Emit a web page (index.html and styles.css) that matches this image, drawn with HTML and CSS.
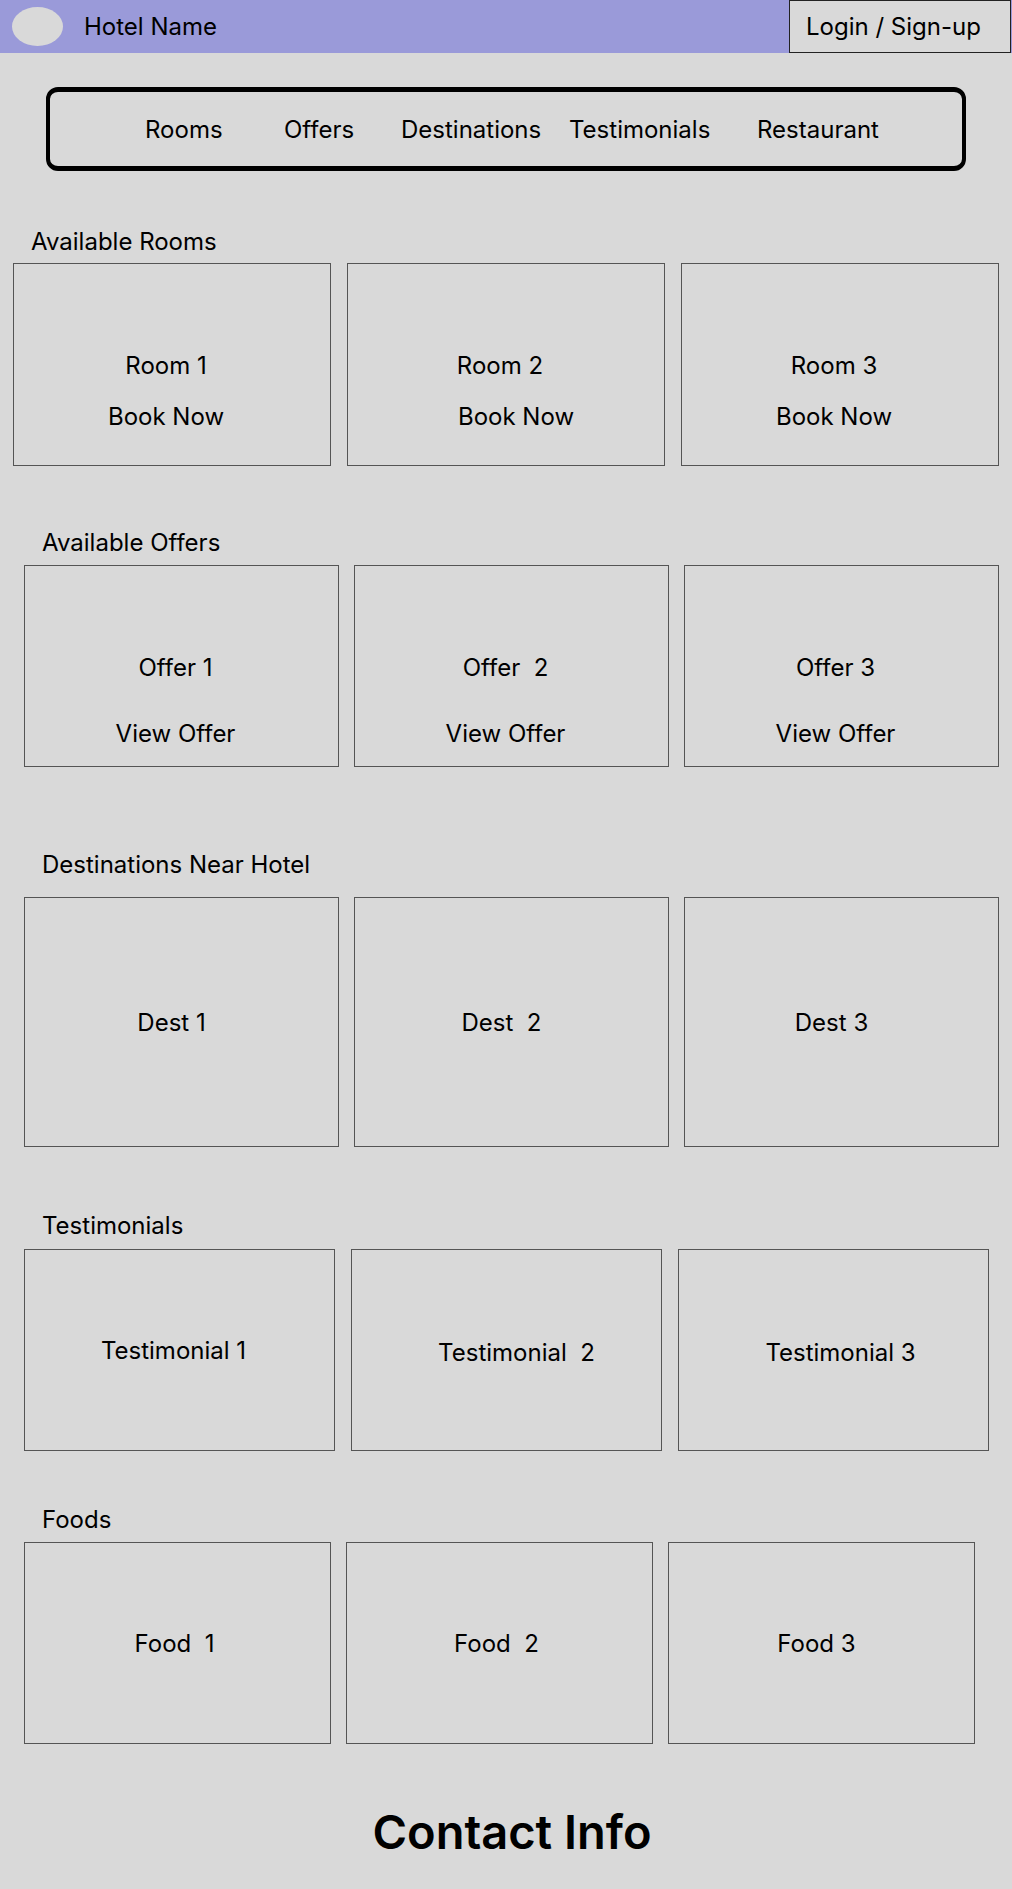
FILE: index.html
```html
<!DOCTYPE html>
<html lang="en">
<head>
    <meta charset="UTF-8">
    <meta name="viewport" content="width=device-width, initial-scale=1.0">
    <title>Hotel Name</title>
    <link rel="stylesheet" href="styles.css">
</head>
<body>
    <header class="topbar">
        <div class="logo"></div>
        <span class="hotel-name">Hotel Name</span>
        <a class="login" href="#">Login / Sign-up</a>
    </header>

    <nav class="menu">
        <a href="#rooms">Rooms</a>
        <a href="#offers">Offers</a>
        <a href="#destinations">Destinations</a>
        <a href="#testimonials">Testimonials</a>
        <a href="#restaurant">Restaurant</a>
    </nav>

    <section class="section rooms" id="rooms">
        <h2 class="section-title">Available Rooms</h2>
        <div class="cards">
            <div class="card"><span>Room 1</span><span>Book Now</span></div>
            <div class="card"><span>Room 2</span><span class="shift">Book Now</span></div>
            <div class="card"><span>Room 3</span><span>Book Now</span></div>
        </div>
    </section>

    <section class="section offers" id="offers">
        <h2 class="section-title">Available Offers</h2>
        <div class="cards">
            <div class="card"><span>Offer 1</span><span>View Offer</span></div>
            <div class="card"><span>Offer  2</span><span>View Offer</span></div>
            <div class="card"><span>Offer 3</span><span>View Offer</span></div>
        </div>
    </section>

    <section class="section dests" id="destinations">
        <h2 class="section-title">Destinations Near Hotel</h2>
        <div class="cards">
            <div class="card"><span>Dest 1</span></div>
            <div class="card"><span>Dest  2</span></div>
            <div class="card"><span>Dest 3</span></div>
        </div>
    </section>

    <section class="section reviews" id="testimonials">
        <h2 class="section-title">Testimonials</h2>
        <div class="cards">
            <div class="card"><span>Testimonial 1</span></div>
            <div class="card"><span>Testimonial  2</span></div>
            <div class="card"><span>Testimonial 3</span></div>
        </div>
    </section>

    <section class="section foods" id="restaurant">
        <h2 class="section-title">Foods</h2>
        <div class="cards">
            <div class="card"><span>Food  1</span></div>
            <div class="card"><span>Food  2</span></div>
            <div class="card"><span>Food 3</span></div>
        </div>
    </section>

    <footer class="contact">Contact Info</footer>
</body>
</html>
```

FILE: styles.css
```css
body {
    margin: 0;
    background-color: #d9d9d9;
    font-family: Inter, "Noto Sans", sans-serif;
    font-size: 24px;
    line-height: 29px;
    color: #000;
}

a {
    color: #000;
    text-decoration: none;
}

/* top bar */
.topbar {
    display: flex;
    align-items: center;
    height: 53px;
    background-color: #9a9ad9;
}

.logo {
    width: 51px;
    height: 39px;
    margin-left: 12px;
    border-radius: 50%;
    background-color: #d9d9d9;
}

.hotel-name {
    margin-left: 21px;
}

.login {
    display: flex;
    align-items: center;
    box-sizing: border-box;
    width: 222px;
    height: 53px;
    margin-left: auto;
    margin-right: 1px;
    padding-left: 16px;
    border: 1px solid #222;
    background-color: #d9d9d9;
}

/* menu */
.menu {
    display: flex;
    align-items: center;
    box-sizing: border-box;
    width: 920px;
    height: 84px;
    margin: 34px auto 0;
    padding-left: 95px;
    border: 4px solid #000;
    border-top-width: 5px;
    border-bottom-width: 5px;
    border-radius: 12px;
}

.menu a:nth-child(1) { width: 139px; }
.menu a:nth-child(2) { width: 117px; }
.menu a:nth-child(3) { width: 168px; }
.menu a:nth-child(4) { width: 188px; }

/* sections */
.section {
    padding-left: 24px;
}

.section-title {
    margin: 0 0 8px 18px;
    font-size: 24px;
    font-weight: 400;
    line-height: 29px;
}

.cards {
    display: grid;
    grid-template-columns: repeat(3, 315px);
    column-gap: 15px;
}

.card {
    display: flex;
    flex-direction: column;
    align-items: center;
    justify-content: center;
    box-sizing: border-box;
    height: 202px;
    border: 1px solid #555;
    white-space: pre;
}

.rooms {
    margin-top: 56px;
    padding-left: 13px;
}

.rooms .section-title {
    margin-bottom: 7px;
}

.rooms .cards {
    grid-template-columns: repeat(3, 318px);
    column-gap: 16px;
}

.rooms .card {
    justify-content: flex-start;
    gap: 22px;
    height: 203px;
    padding-top: 87px;
    padding-right: 12px;
}

.rooms .shift {
    margin-left: 32px;
}

.offers {
    margin-top: 62px;
}

.offers .card {
    justify-content: flex-start;
    gap: 37px;
    padding-top: 87px;
    padding-right: 12px;
}

.dests {
    margin-top: 83px;
}

.dests .section-title {
    margin-bottom: 18px;
}

.dests .card {
    height: 250px;
    padding-right: 20px;
}

.reviews {
    margin-top: 64px;
}

.reviews .section-title {
    margin-bottom: 9px;
}

.reviews .cards {
    grid-template-columns: repeat(3, 311px);
    column-gap: 16px;
}

.reviews .card:nth-child(1) {
    padding-right: 12px;
}

.reviews .card:nth-child(2) {
    padding-left: 20px;
    padding-top: 4px;
}

.reviews .card:nth-child(3) {
    padding-left: 14px;
    padding-top: 4px;
}

.foods {
    margin-top: 54px;
}

.foods .section-title {
    margin-bottom: 8px;
}

.foods .cards {
    grid-template-columns: repeat(3, 307px);
    column-gap: 15px;
}

.foods .card {
    padding-right: 6px;
}

.foods .card:nth-child(3) {
    padding-right: 10px;
}

.contact {
    margin-top: 59px;
    padding-left: 12px;
    text-align: center;
    font-size: 47px;
    font-weight: 600;
    line-height: 58px;
}
```
